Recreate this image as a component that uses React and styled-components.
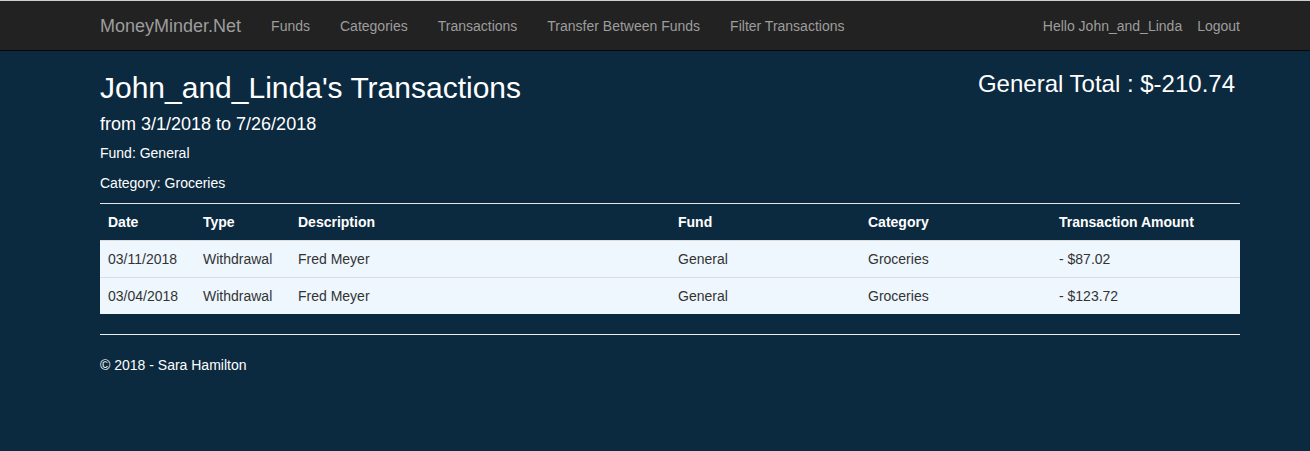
import React from 'react';
import styled, { createGlobalStyle } from 'styled-components';

const GlobalStyle = createGlobalStyle`
  html, body {
    margin: 0;
    padding: 0;
    background: #0c2a3f;
    font-family: "Liberation Sans", Arial, Helvetica, sans-serif;
    font-size: 14px;
    line-height: 20px;
    color: #fff;
  }
  * { box-sizing: border-box; }
`;

const Navbar = styled.header`
  height: 51px;
  background: #222;
  border-top: 1px solid #cfcfcf;
  border-bottom: 1px solid #080808;
`;

const Container = styled.div`
  width: 1140px;
  margin-left: 100px;
`;

const NavInner = styled(Container)`
  height: 100%;
  display: flex;
  align-items: center;
`;

const Brand = styled.a`
  font-size: 18px;
  color: #9d9d9d;
  margin-right: 15px;
  text-decoration: none;
`;

const NavList = styled.nav`
  display: flex;
  align-items: center;
  margin-left: ${p => (p.$right ? 'auto' : '0')};
`;

const NavItem = styled.a`
  padding: 0 ${p => (p.$edge ? '0' : '15px')} 0 15px;
  color: #9d9d9d;
  text-decoration: none;
`;

const NavText = styled.span`
  color: #9d9d9d;
`;

const Header = styled.div`
  display: flex;
  justify-content: space-between;
  align-items: flex-start;
`;

const Title = styled.h2`
  font-size: 30px;
  font-weight: 500;
  line-height: 33px;
  margin: 20px 0 10px;
`;

const Total = styled.h3`
  font-size: 24px;
  font-weight: 500;
  line-height: 26px;
  margin: 20px 5px 0 0;
`;

const Range = styled.h4`
  font-size: 18px;
  font-weight: 500;
  line-height: 20px;
  margin: 0 0 9px;
`;

const Info = styled.p`
  margin: 0 0 10px;
`;

const Table = styled.table`
  width: 100%;
  border-collapse: collapse;
  table-layout: fixed;
  border-top: 1px solid #e6e6e6;
  margin: 0 0 20px;
`;

const Th = styled.th`
  text-align: left;
  font-weight: bold;
  padding: 8px;
  line-height: 20px;
  width: ${p => p.$w}px;
`;

const Row = styled.tr`
  background: #eef7fe;
  color: #333;
  border-top: 1px solid #ddd;
`;

const Td = styled.td`
  padding: 8px;
  line-height: 20px;
`;

const Rule = styled.hr`
  border: 0;
  border-top: 1px solid #eee;
  margin: 0 0 20px;
`;

const columns = [
  ['Date', 95],
  ['Type', 95],
  ['Description', 380],
  ['Fund', 190],
  ['Category', 191],
  ['Transaction Amount', 189],
];

const rows = [
  ['03/11/2018', 'Withdrawal', 'Fred Meyer', 'General', 'Groceries', '- $87.02'],
  ['03/04/2018', 'Withdrawal', 'Fred Meyer', 'General', 'Groceries', '- $123.72'],
];

export default function App() {
  return (
    <>
      <GlobalStyle />
      <Navbar>
        <NavInner>
          <Brand>MoneyMinder.Net</Brand>
          <NavList>
            <NavItem>Funds</NavItem>
            <NavItem>Categories</NavItem>
            <NavItem>Transactions</NavItem>
            <NavItem>Transfer Between Funds</NavItem>
            <NavItem>Filter Transactions</NavItem>
          </NavList>
          <NavList $right>
            <NavText>Hello John_and_Linda</NavText>
            <NavItem $edge>Logout</NavItem>
          </NavList>
        </NavInner>
      </Navbar>
      <Container>
        <Header>
          <Title>John_and_Linda's Transactions</Title>
          <Total>General Total : $-210.74</Total>
        </Header>
        <Range>from 3/1/2018 to 7/26/2018</Range>
        <Info>Fund: General</Info>
        <Info>Category: Groceries</Info>
        <Table>
          <thead>
            <tr>
              {columns.map(([label, w]) => (
                <Th key={label} $w={w}>{label}</Th>
              ))}
            </tr>
          </thead>
          <tbody>
            {rows.map((r, i) => (
              <Row key={i}>
                {r.map((c, j) => <Td key={j}>{c}</Td>)}
              </Row>
            ))}
          </tbody>
        </Table>
        <Rule />
        <Info>© 2018 - Sara Hamilton</Info>
      </Container>
    </>
  );
}
